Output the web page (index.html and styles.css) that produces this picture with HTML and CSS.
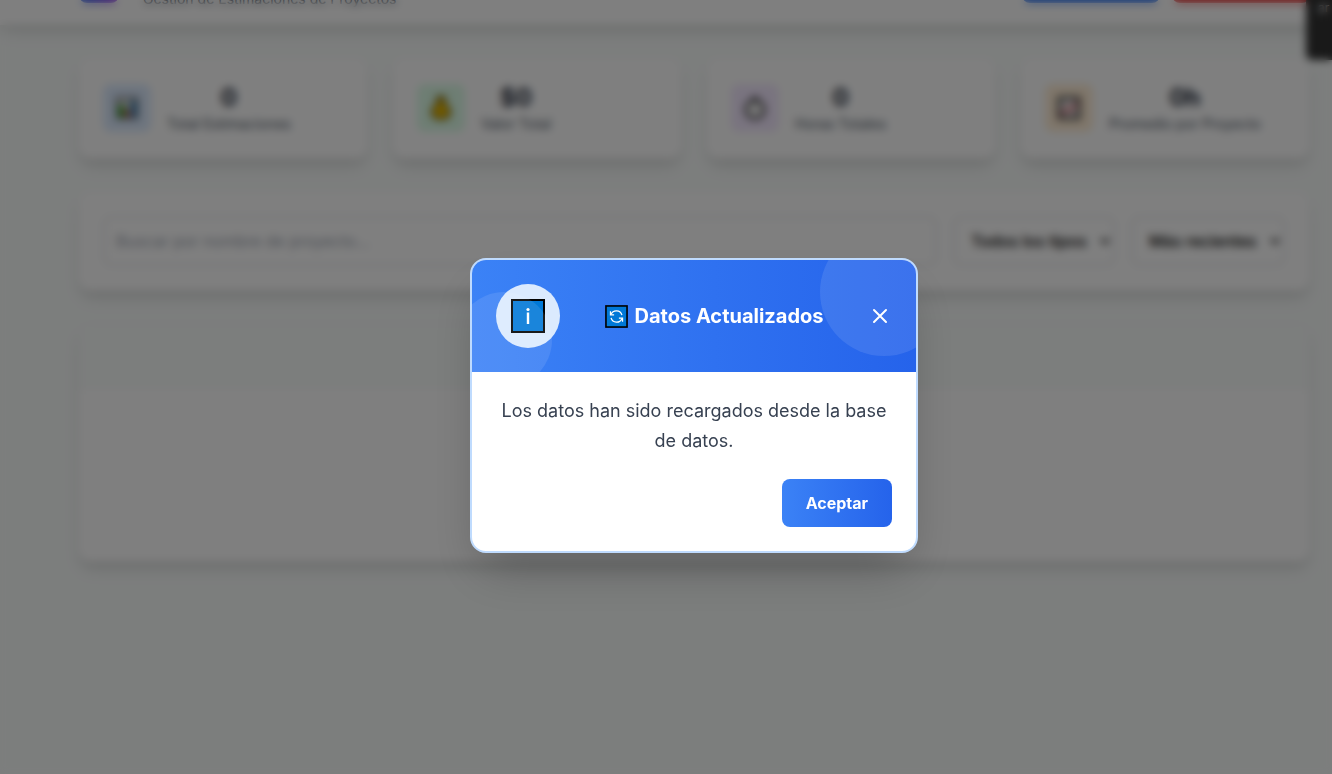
FILE: index.html
```html
<!DOCTYPE html>
<html lang="es">
<head>
<meta charset="utf-8">
<title>Estimaciones</title>
<link rel="stylesheet" href="styles.css">
</head>
<body>
<div class="page">
  <header class="topbar">
    <span class="logo"></span>
    <p class="subtitle">Gestión de Estimaciones de Proyectos</p>
    <button class="action action-blue" type="button"></button>
    <button class="action action-red" type="button"></button>
  </header>
  <main class="content">
    <section class="stats">
      <article class="card stat">
        <span class="stat-icon blue">
          <svg width="24" height="24" viewBox="0 0 24 24"><rect x="1" y="1" width="22" height="22" fill="#333"/><rect x="2.500" y="2.500" width="19" height="19" fill="#ddd"/><rect x="4" y="9" width="5" height="12" fill="#16a616"/><rect x="10" y="13" width="4" height="8" fill="#e23b2e"/><rect x="15" y="5" width="6" height="16" fill="#3d88bd"/></svg>
        </span>
        <div class="stat-text"><p class="value">0</p><p class="label">Total Estimaciones</p></div>
      </article>
      <article class="card stat">
        <span class="stat-icon green">
          <svg width="24" height="24" viewBox="0 0 24 24"><path d="M8 1h8l-1 6c3 2 6 5 6 9 0 5-3 7-9 7s-9-2-9-7c0-4 3-7 6-9z" fill="#e8b900" stroke="#574300" stroke-width="2"/></svg>
        </span>
        <div class="stat-text"><p class="value">$0</p><p class="label">Valor Total</p></div>
      </article>
      <article class="card stat">
        <span class="stat-icon purple">
          <svg width="24" height="24" viewBox="0 0 24 24"><path d="M9 1h6v4H9z" fill="#333"/><circle cx="12" cy="13.500" r="9" fill="#fff" stroke="#333" stroke-width="3"/><path d="M12 9v5" stroke="#999"/></svg>
        </span>
        <div class="stat-text"><p class="value">0</p><p class="label">Horas Totales</p></div>
      </article>
      <article class="card stat">
        <span class="stat-icon orange">
          <svg width="24" height="24" viewBox="0 0 24 24"><rect x="2" y="2" width="20" height="20" fill="#eee" stroke="#333" stroke-width="3"/><path d="M4 19l6-7 4 3 6-9" fill="none" stroke="#d96b74" stroke-width="3"/></svg>
        </span>
        <div class="stat-text"><p class="value">0h</p><p class="label">Promedio por Proyecto</p></div>
      </article>
    </section>
    <section class="card filters">
      <input class="field search" type="text" placeholder="Buscar por nombre de proyecto..." aria-label="Buscar por nombre de proyecto">
      <select class="field select" aria-label="Tipo"><option>Todos los tipos</option></select>
      <select class="field select" aria-label="Orden"><option>Más recientes</option></select>
    </section>
    <section class="card list"><div class="list-head"></div></section>
  </main>
  <aside class="side-note">ar</aside>
</div>
<div class="overlay">
  <div class="modal" role="dialog" aria-modal="true" aria-labelledby="modal-title">
    <div class="modal-head">
      <span class="badge">
        <svg width="34" height="34" viewBox="0 0 34 34"><rect x="1" y="1" width="32" height="32" fill="#0078d7" stroke="#000" stroke-width="2"/><circle cx="17" cy="10.500" r="1.600" fill="#fff"/><path d="M17 13.500v11.500" stroke="#fff" stroke-width="2.400"/></svg>
      </span>
      <h2 class="modal-title" id="modal-title">
        <svg width="23" height="23" viewBox="0 0 24 24"><rect x="1" y="1" width="22" height="22" fill="#0078d7" stroke="#000" stroke-width="1.700"/><g fill="none" stroke="#fff" stroke-width="1.300"><path d="M6.300 10a6 6 0 0 1 11.400.5M17.700 14a6 6 0 0 1-11.400-.5"/><path d="M5.700 6.500V10.300H9.500M18.300 17.500V13.700H14.500"/></g></svg>
        Datos Actualizados
      </h2>
      <button class="close" type="button" aria-label="Cerrar">
        <svg width="24" height="24" viewBox="0 0 24 24" fill="none" stroke="#fff" stroke-width="2" stroke-linecap="round"><path d="M6 18L18 6M6 6l12 12"/></svg>
      </button>
    </div>
    <div class="modal-body">
      <p class="message">Los datos han sido recargados desde la base de datos.</p>
      <button class="accept" type="button">Aceptar</button>
    </div>
  </div>
</div>
</body>
</html>
```
FILE: styles.css
```css
* { box-sizing: border-box; }
body, p, h2 { margin: 0; }
body {
  font-family: Inter, "Liberation Sans", sans-serif;
  font-size: 16px;
  line-height: 24px;
  color: #1f2937;
  background: #f9fcfb;
}
button, input, select { font: inherit; }
svg { display: block; flex: none; }
.page { position: relative; height: 100vh; overflow: hidden; }

.topbar {
  display: flex;
  align-items: flex-end;
  height: 25px;
  padding: 0 22px 16px 79px;
  background: #fff;
  box-shadow: 0 10px 15px -3px rgba(0,0,0,.1), 0 4px 6px -2px rgba(0,0,0,.1);
}
.logo {
  flex: none;
  width: 40px;
  height: 40px;
  margin-bottom: 6px;
  border-radius: 8px;
  background: linear-gradient(90deg, #2563eb, #9333ea);
}
.subtitle { margin-left: 24px; margin-right: auto; font-size: 14px; line-height: 20px; color: #4b5563; }
.action { height: 40px; width: 138px; margin-bottom: 6px; border: 0; border-radius: 8px; flex: none; }
.action-blue { background: #2f74f0; margin-right: 12px; }
.action-red { background: #e53535; }

.content { display: flex; flex-direction: column; gap: 32px; padding: 32px 22px 32px 78px; }
.card {
  background: #fff;
  border: 1px solid #f3f4f6;
  border-radius: 12px;
  box-shadow: 0 10px 15px -3px rgba(0,0,0,.1), 0 4px 6px -2px rgba(0,0,0,.1);
}
.stats { display: grid; grid-template-columns: repeat(4, 1fr); gap: 24px; }
.stat { display: flex; align-items: center; gap: 16px; padding: 24px; }
.stat-icon { display: grid; place-items: center; width: 48px; height: 48px; border-radius: 8px; flex: none; }
.blue { background: #dbeafe; }
.green { background: #dcfce7; }
.purple { background: #f3e8ff; }
.orange { background: #ffedd5; }
.stat-text { text-align: center; }
.value { font-size: 24px; line-height: 32px; font-weight: 700; }
.label { font-size: 14px; line-height: 20px; color: #4b5563; }

.filters { display: flex; gap: 16px; padding: 24px; }
.field { border: 2px solid #e5e7eb; border-radius: 8px; padding: 11px; height: 50px; background: #fff; }
.search { flex: 1; min-width: 0; }
.search::placeholder { color: #9ca3af; }
.select { padding: 11px 10px 11px 12px; font-weight: 500; color: #000; }
.list { height: 239px; overflow: hidden; }
.list-head { height: 64px; background: #f9fcfb; border-bottom: 1px solid #eef0f2; }

.side-note {
  position: absolute;
  top: -4px;
  right: -8px;
  width: 34px;
  height: 64px;
  padding: 0 12px;
  border-radius: 6px;
  background: #333;
  color: #fff;
  font-size: 12px;
}

.overlay {
  position: fixed;
  inset: 0;
  display: flex;
  align-items: center;
  justify-content: center;
  padding: 37px 0 0 56px;
  background: rgba(0,0,0,.5);
  backdrop-filter: blur(4px);
}
.modal {
  width: 448px;
  max-width: 100%;
  overflow: hidden;
  border: 2px solid #bfdbfe;
  border-radius: 16px;
  background: #fff;
  box-shadow: 0 25px 50px -12px rgba(0,0,0,.25);
}
.modal-head {
  position: relative;
  display: flex;
  align-items: center;
  justify-content: space-between;
  padding: 24px;
  overflow: hidden;
  color: #fff;
  background: linear-gradient(90deg, #3b82f6, #2563eb);
}
.modal-head::before, .modal-head::after {
  content: "";
  position: absolute;
  border-radius: 50%;
  background: rgba(255,255,255,.1);
}
.modal-head::before { top: -32px; right: -32px; width: 128px; height: 128px; }
.modal-head::after { bottom: -16px; left: -16px; width: 96px; height: 96px; }
.badge { display: grid; place-items: center; width: 64px; height: 64px; border-radius: 50%; background: #dbeafe; }
.modal-title { display: flex; align-items: center; gap: 7px; font-size: 20px; line-height: 28px; font-weight: 700; }
.close { padding: 0; border: 0; background: none; }
.modal-body { display: flex; flex-direction: column; gap: 23px; padding: 24px; }
.message { font-size: 18px; line-height: 30px; text-align: center; color: #374151; }
.accept {
  align-self: flex-end;
  padding: 12px 24px;
  border: 0;
  border-radius: 8px;
  color: #fff;
  font-weight: 700;
  background: linear-gradient(90deg, #3b82f6, #2563eb);
}
```
